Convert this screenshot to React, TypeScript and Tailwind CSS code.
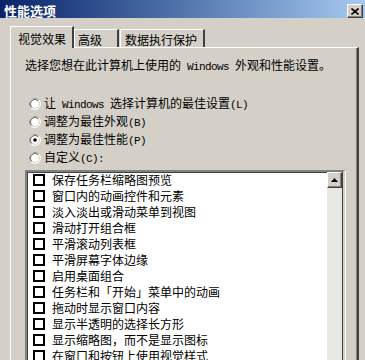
const effects = [
  "保存任务栏缩略图预览",
  "窗口内的动画控件和元素",
  "淡入淡出或滑动菜单到视图",
  "滑动打开组合框",
  "平滑滚动列表框",
  "平滑屏幕字体边缘",
  "启用桌面组合",
  "任务栏和「开始」菜单中的动画",
  "拖动时显示窗口内容",
  "显示半透明的选择长方形",
  "显示缩略图，而不是显示图标",
  "在窗口和按钮上使用视觉样式",
  "在桌面上为图标标签使用阴影",
];

// half-width latin text, SimSun style
function Latin({ children }: { children: string }) {
  return (
    <span className="font-['Liberation_Mono',monospace] text-[11px] tracking-[-0.6px] whitespace-pre">{children}</span>
  );
}

function Radio({ checked }: { checked?: boolean }) {
  return (
    <svg width="12" height="12" viewBox="0 0 12 12" className="shrink-0">
      <circle cx="6" cy="6" r="5.5" fill="white" stroke="#ffffff" />
      <path d="M2.11 9.89 A5.5 5.5 0 0 1 9.89 2.11" fill="none" stroke="#9a9893" />
      <circle cx="6" cy="6" r="4.5" fill="white" stroke="#d4d0c8" />
      <path d="M2.82 9.18 A4.5 4.5 0 0 1 9.18 2.82" fill="none" stroke="#6f6e6a" />
      {checked && <circle cx="6" cy="6" r="1.8" fill="black" />}
    </svg>
  );
}

export default function App() {
  return (
    <div className="w-[365px] h-[360px] overflow-hidden bg-[#d4d0c8] text-black text-[12px] font-['Noto_Sans_CJK_SC',sans-serif]">
      {/* Title bar */}
      <div className="h-[18px] pt-[4px] pl-[4px] pr-[2px] flex items-center justify-between bg-gradient-to-r from-[#0a246a] to-[#a6caf0]">
        <span className="text-white font-bold text-[13px] leading-[14px]">性能选项</span>
        <div className="w-[16px] h-[14px] bg-[#d4d0c8] border border-t-white border-l-white border-r-[#404040] border-b-[#404040] shadow-[inset_-1px_-1px_0_#808080] flex items-center justify-center">
          <svg width="8" height="7" viewBox="0 0 8 7">
            <path d="M0.5 0.5 L7.5 6.5 M7.5 0.5 L0.5 6.5" stroke="black" strokeWidth="1.6" />
          </svg>
        </div>
      </div>

      <div className="pt-[8px] pl-[10px] pr-[6px]">
        {/* Tabs */}
        <div className="flex items-end h-[21px] relative z-10">
          <div className="w-[64px] h-[22px] -mb-[1px] bg-[#d4d0c8] border-t border-l border-white border-r-2 border-r-[#404040] pl-[7px] pt-[5px] leading-[14px]">
            视觉效果
          </div>
          <div className="w-[45px] h-[18px] border-t border-l border-white border-r-2 border-r-[#404040] pl-[3px] pt-[3px] leading-[14px]">
            高级
          </div>
          <div className="ml-[1px] w-[85px] h-[18px] border-t border-l border-white border-r-2 border-r-[#404040] pl-[4px] pt-[3px] leading-[14px]">
            数据执行保护
          </div>
        </div>

        {/* Tab panel */}
        <div className="h-[330px] border-t border-l border-white border-r-2 border-r-[#404040] shadow-[inset_-1px_0_0_#808080] pl-[14px] pr-[12px] pt-[10px]">
          <p className="leading-[14px] whitespace-nowrap">
            选择您想在此计算机上使用的<Latin> Windows </Latin>外观和性能设置。
          </p>

          <div className="mt-[21px] flex flex-col">
            <label className="h-[18px] flex items-center gap-[3px] pl-[4px] whitespace-nowrap">
              <Radio />
              <span className="leading-[14px]">
                让<Latin> Windows </Latin>选择计算机的最佳设置<Latin>(L)</Latin>
              </span>
            </label>
            <label className="h-[18px] flex items-center gap-[3px] pl-[4px]">
              <Radio />
              <span className="leading-[14px]">
                调整为最佳外观<Latin>(B)</Latin>
              </span>
            </label>
            <label className="h-[18px] flex items-center gap-[3px] pl-[4px]">
              <Radio checked />
              <span className="leading-[14px]">
                调整为最佳性能<Latin>(P)</Latin>
              </span>
            </label>
            <label className="h-[18px] flex items-center gap-[3px] pl-[4px]">
              <Radio />
              <span className="leading-[14px]">
                自定义<Latin>(C):</Latin>
              </span>
            </label>
          </div>

          {/* Effects list */}
          <div className="mt-[3px] h-[240px] flex bg-white border-2 border-t-[#808080] border-l-[#808080] border-r-[#d4d0c8] border-b-[#d4d0c8] shadow-[inset_1px_1px_0_#404040,1px_1px_0_#ffffff]">
            <div className="flex-1 flex flex-col">
              {effects.map((label) => (
                <div key={label} className="h-[16px] shrink-0 flex items-center gap-[7px] pl-[6px] whitespace-nowrap">
                  <span className="w-[12px] h-[12px] shrink-0 border-2 border-black bg-white" />
                  <span className="leading-[16px]">{label}</span>
                </div>
              ))}
            </div>
            <div className="w-[16px] flex flex-col bg-[#e9e7e2] border-r border-[#404040]">
              <div className="h-[16px] bg-[#d4d0c8] border border-t-white border-l-white border-r-[#404040] border-b-[#404040] shadow-[inset_-1px_-1px_0_#808080] flex items-center justify-center">
                <svg width="7" height="4" viewBox="0 0 7 4">
                  <path d="M3.5 0 L7 4 L0 4 Z" fill="black" />
                </svg>
              </div>
            </div>
          </div>
        </div>
      </div>
    </div>
  );
}
